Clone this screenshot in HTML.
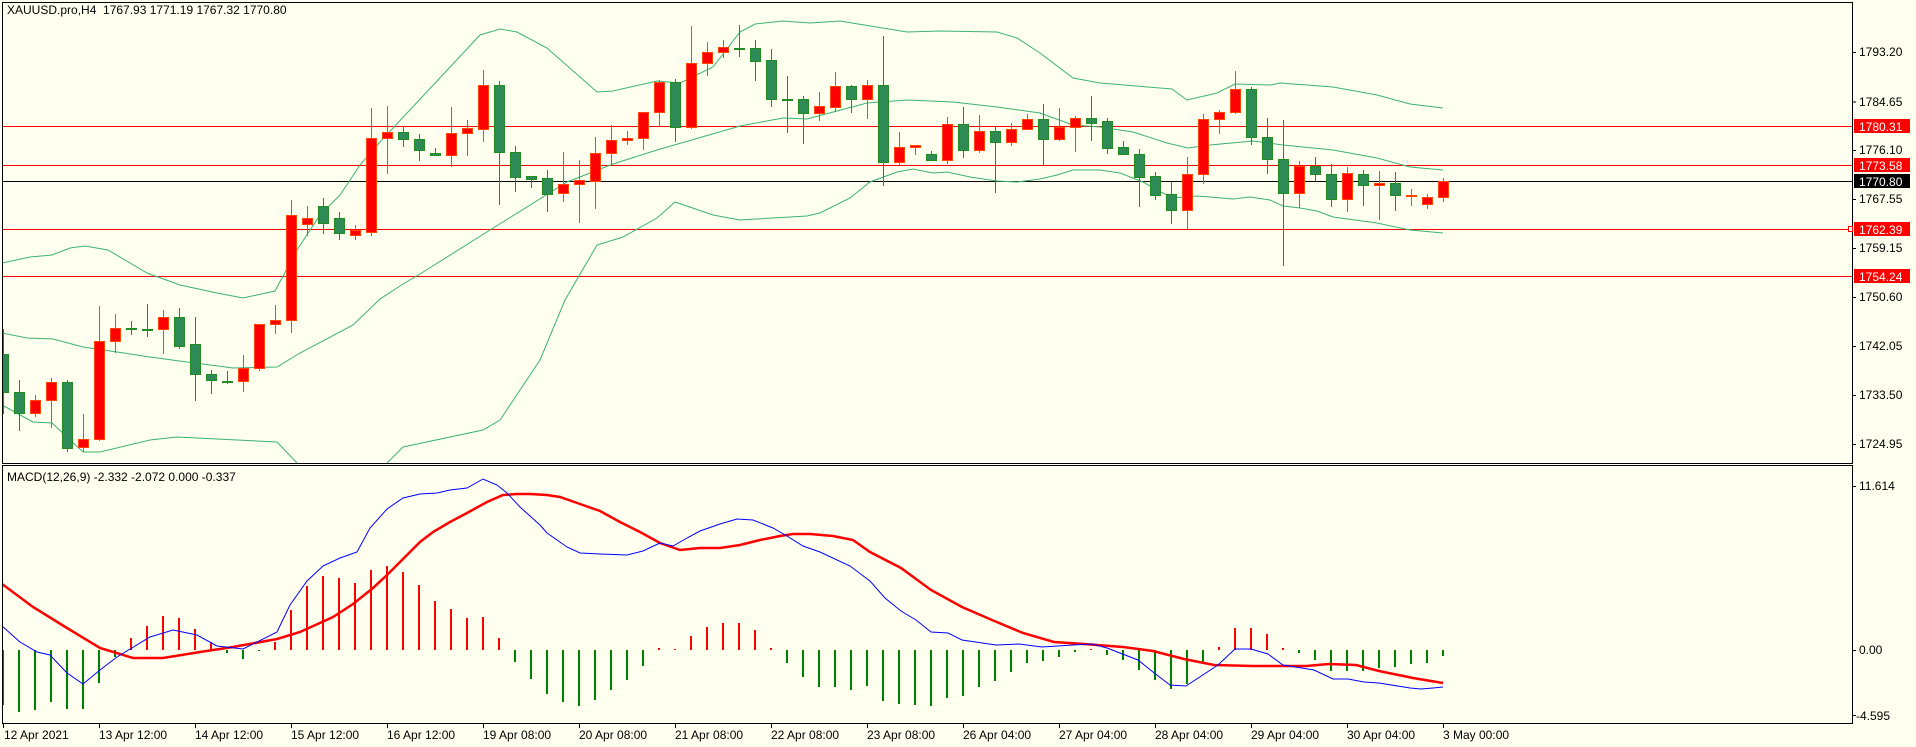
<!DOCTYPE html>
<html><head><meta charset="utf-8"><style>
html,body{margin:0;padding:0;background:#FFFFF0;}
svg{display:block;font-family:"Liberation Sans",sans-serif;font-size:12px;}
</style></head><body>
<svg id="s" width="1916" height="747" xmlns="http://www.w3.org/2000/svg">
<rect x="0" y="0" width="1916" height="747" fill="#FFFFF0"/>
<defs>
<clipPath id="c1"><rect x="2" y="2" width="1850" height="461"/></clipPath>
<clipPath id="c2"><rect x="2" y="465" width="1850" height="258"/></clipPath>
</defs>
<g id="top" clip-path="url(#c1)"></g>
<g id="bot" clip-path="url(#c2)"></g>
<g stroke="#000" stroke-width="1" fill="none" shape-rendering="crispEdges">
<rect x="2.5" y="2.5" width="1850" height="461"/>
<rect x="2.5" y="465.5" width="1850" height="258"/>
</g>
<g id="ticks" stroke="#000" shape-rendering="crispEdges"></g>
<g fill="#000">
<text x="7" y="14">XAUUSD.pro,H4&#160;&#160;1767.93 1771.19 1767.32 1770.80</text>
<text x="7" y="481">MACD(12,26,9) -2.332 -2.072 0.000 -0.337</text>
<text x="1859" y="56">1793.20</text>
<text x="1859" y="106">1784.65</text>
<text x="1859" y="154">1776.10</text>
<text x="1859" y="203">1767.55</text>
<text x="1859" y="252">1759.15</text>
<text x="1859" y="301">1750.60</text>
<text x="1859" y="350">1742.05</text>
<text x="1859" y="399">1733.50</text>
<text x="1859" y="448">1724.95</text>
<text x="1859" y="490">11.614</text>
<text x="1859" y="654">0.00</text>
<text x="1856" y="720">-4.595</text>
</g>
<g shape-rendering="crispEdges">
<rect x="1854" y="119" width="56" height="14" fill="#FF0000"/>
<rect x="1854" y="158" width="56" height="14" fill="#FF0000"/>
<rect x="1854" y="174" width="56" height="14" fill="#000"/>
<rect x="1854" y="222" width="56" height="14" fill="#FF0000"/>
<rect x="1854" y="269" width="56" height="14" fill="#FF0000"/>
</g>
<g fill="#fff">
<text x="1859" y="131">1780.31</text>
<text x="1859" y="170">1773.58</text>
<text x="1859" y="186">1770.80</text>
<text x="1859" y="234">1762.39</text>
<text x="1859" y="281">1754.24</text>
</g>
<g fill="#000">
<text x="4" y="739">12 Apr 2021</text>
<text x="99" y="739">13 Apr 12:00</text>
<text x="195" y="739">14 Apr 12:00</text>
<text x="291" y="739">15 Apr 12:00</text>
<text x="387" y="739">16 Apr 12:00</text>
<text x="483" y="739">19 Apr 08:00</text>
<text x="579" y="739">20 Apr 08:00</text>
<text x="675" y="739">21 Apr 08:00</text>
<text x="771" y="739">22 Apr 08:00</text>
<text x="867" y="739">23 Apr 08:00</text>
<text x="963" y="739">26 Apr 04:00</text>
<text x="1059" y="739">27 Apr 04:00</text>
<text x="1155" y="739">28 Apr 04:00</text>
<text x="1251" y="739">29 Apr 04:00</text>
<text x="1347" y="739">30 Apr 04:00</text>
<text x="1443" y="739">3 May 00:00</text>
</g>
</svg>
<script>
var NS="http://www.w3.org/2000/svg";
function el(p,t,a){var e=document.createElementNS(NS,t);for(var k in a)e.setAttribute(k,a[k]);p.appendChild(e);return e;}
var top_=document.getElementById('top'),bot=document.getElementById('bot'),tk=document.getElementById('ticks');
function pl(p,pts,col,w){el(p,'polyline',{points:pts.map(function(q){return q.join(',')}).join(' '),fill:'none',stroke:col,'stroke-width':w});}
// horizontal lines
[[126.5,'#FF0000'],[165.5,'#FF0000'],[229.5,'#FF0000'],[276.5,'#FF0000'],[181.5,'#000']].forEach(function(h){
 el(top_,'line',{x1:2,x2:1852,y1:h[0],y2:h[0],stroke:h[1],'stroke-width':1,'shape-rendering':'crispEdges'});});
el(document.getElementById('s'),'rect',{x:1848.5,y:226.5,width:4,height:5,fill:'#fff',stroke:'#FF0000'});
// bands
var up=[[2,263],[30,257],[52,255],[70,248],[85,246],[108,250],[147,273],[180,285],[217,293],[243,298],[275,291],[297,250],[320,215],[340,195],[360,165],[380,142],[480,35],[500,29],[517,32],[547,48],[597,92],[613,91],[657,81],[680,83],[713,67],[740,32],[755,24],[783,21],[810,23],[840,21],[907,32],[940,31],[997,32],[1017,38],[1040,53],[1073,78],[1100,83],[1172,89],[1187,100],[1217,93],[1235,84],[1270,85],[1280,83],[1333,87],[1377,95],[1410,104],[1443,108]];
var mid=[[2,333],[27,338],[53,339],[83,347],[117,352],[150,357],[187,362],[233,368],[277,367],[300,353],[353,325],[380,299],[403,284],[420,274],[490,230],[567,182],[613,164],[657,150],[740,126],[783,118],[807,119],[867,103],[880,102],[907,100],[953,102],[997,107],[1040,113],[1073,125],[1100,127],[1133,132],[1167,143],[1188,148],[1210,145],[1253,141],[1283,145],[1333,150],[1377,158],[1410,167],[1443,170]];
var lo=[[2,405],[33,422],[52,423],[83,452],[100,452],[150,440],[177,437],[217,439],[277,442],[297,463],[310,480],[370,480],[387,463],[403,447],[483,430],[500,420],[540,360],[565,300],[597,245],[623,237],[657,218],[675,202],[713,215],[740,220],[807,216],[820,213],[850,198],[870,182],[897,172],[913,169],[933,173],[947,172],[970,177],[997,181],[1017,182],[1040,179],[1057,175],[1073,170],[1100,170],[1120,173],[1143,182],[1172,198],[1197,196],[1210,197],[1233,199],[1250,197],[1270,200],[1283,206],[1300,208],[1317,211],[1333,217],[1377,223],[1410,230],[1443,233]];
[up,mid,lo].forEach(function(b){pl(top_,b,'#3CB371',1);});
// candles
var C="g 354 392 329 414|g 392 413 380 431|r 400 413 395 417|r 382 400 378 428|g 382 448 380 452|r 439 447 414 452|r 341 439 306 441|r 328 341 314 353|g 328 328 321 335|g 329 329 304 337|r 317 329 310 354|g 317 346 308 349|g 344 374 317 401|g 374 380 370 394|g 381 381 371 384|r 368 381 355 392|r 324 368 324 371|r 320 324 305 334|r 215 320 200 333|r 218 224 206 236|g 206 223 198 234|g 218 233 212 240|r 230 235 225 240|r 138 232 108 236|r 132 138 106 174|g 132 139 127 147|g 139 150 134 161|g 153 155 148 155|r 133 155 107 167|r 128 133 120 156|r 85 129 70 142|g 85 152 81 205|g 152 177 146 192|g 176 179 176 188|g 178 194 170 212|r 184 193 152 202|r 180 184 160 223|r 153 181 137 209|r 140 153 125 165|r 138 140 131 145|r 112 138 112 150|r 82 112 80 127|g 82 127 79 142|r 63 127 26 129|r 52 63 42 76|r 47 52 40 58|g 48 48 25 57|g 48 61 40 81|g 60 99 49 107|g 99 99 76 133|g 99 113 96 144|r 106 113 92 121|r 86 107 72 112|g 86 99 85 113|r 85 99 80 119|g 85 162 36 186|r 147 162 132 165|r 145 147 145 155|g 154 160 151 160|r 124 160 117 164|g 124 150 107 158|r 131 150 115 153|g 131 142 127 193|r 129 142 123 146|r 119 129 114 129|g 119 139 104 165|r 127 139 108 141|r 118 127 116 152|g 118 123 96 141|g 121 148 118 154|g 147 154 141 154|g 154 177 149 207|g 176 195 172 200|g 194 210 182 224|r 174 210 157 229|r 119 174 114 184|r 112 119 110 134|r 89 112 71 114|g 89 137 87 145|g 137 159 118 174|g 159 193 120 266|r 166 193 161 208|g 166 174 157 181|g 174 199 164 207|r 173 199 167 212|g 174 185 170 206|r 183 185 171 220|g 183 195 172 211|r 195 195 189 206|r 197 204 194 209|r 181 197 178 202".split('|');
C.forEach(function(s,i){var a=s.split(' '),x=3+16*i,bt=+a[1],bb=+a[2],wt=+a[3],wb=+a[4];
 var wc=a[0]=='r'?'#FF4500':'#228B22',fc=a[0]=='r'?'#FF0000':'#2E8B57';
 el(top_,'line',{x1:x+.5,x2:x+.5,y1:wt,y2:wb,stroke:wc,'stroke-width':1,'shape-rendering':'crispEdges'});
 if(bb-bt<2){el(top_,'rect',{x:x-5,y:bt,width:11,height:2,fill:wc,'shape-rendering':'crispEdges'});}
 else el(top_,'rect',{x:x-4.5,y:bt+.5,width:10,height:bb-bt,fill:fc,stroke:wc,'stroke-width':1,'shape-rendering':'crispEdges'});
});
// histogram
var H=[705,712,710,702,709,709,683,657,638,626,616,618,629,642,653,659,651,642,610,586,576,578,583,570,566,572,585,601,609,618,617,638,662,679,694,702,706,700,690,680,666,648,649,636,627,623,623,630,648,663,677,687,687,690,686,701,704,705,706,698,696,687,681,672,663,661,657,652,649,655,660,670,680,689,684,664,647,628,628,634,648,653,660,671,671,671,668,667,664,663,656];
H.forEach(function(v,i){var x=3+16*i;var up=v<650;
 el(bot,'rect',{x:x-1,y:Math.min(v,650),width:2,height:Math.max(1,Math.abs(v-650)),fill:up?'#FF0000':'#008000','shape-rendering':'crispEdges'});});
var sig=[[2,584],[33,607],[67,628],[100,648],[133,658],[163,658],[200,652],[233,647],[277,639],[300,632],[333,617],[353,604],[373,588],[387,575],[420,542],[433,532],[450,522],[467,513],[487,502],[503,495],[517,494],[530,494],[547,495],[560,497],[580,504],[600,511],[620,522],[640,532],[660,543],[680,550],[700,548],[720,548],[740,545],[760,540],[780,536],[793,534],[810,534],[833,536],[853,540],[870,552],[901,568],[931,590],[962,607],[992,620],[1023,633],[1054,642],[1084,644],[1123,647],[1153,651],[1184,659],[1214,665],[1253,666],[1306,666],[1329,664],[1356,665],[1379,671],[1413,678],[1443,683]];
var mac=[[2,626],[20,642],[37,652],[50,655],[67,673],[83,684],[100,670],[117,657],[150,637],[173,630],[197,635],[217,646],[243,649],[277,632],[290,605],[307,581],[323,566],[340,558],[357,552],[370,528],[387,509],[403,498],[420,494],[437,493],[450,490],[467,488],[483,479],[497,485],[507,493],[520,507],[540,525],[547,533],[567,547],[580,553],[600,554],[627,555],[643,551],[660,543],[673,546],[687,538],[700,531],[720,524],[737,519],[753,520],[773,528],[787,536],[803,546],[820,552],[850,566],[870,581],[885,598],[901,611],[916,620],[931,632],[948,633],[962,640],[996,645],[1019,644],[1042,647],[1073,645],[1092,644],[1107,648],[1138,660],[1153,672],[1170,685],[1186,686],[1218,665],[1235,649],[1251,649],[1268,654],[1283,665],[1314,670],[1333,679],[1348,679],[1364,682],[1379,683],[1410,688],[1421,689],[1433,688],[1443,687]];
pl(bot,sig,'#FF0000',2.5);
pl(bot,mac,'#0000FF',1);
// ticks
[52,101.5,150,199,248,297,346,395,444,486,650,715].forEach(function(y){el(tk,'line',{x1:1852,x2:1856,y1:y+.5,y2:y+.5});});
for(var k=0;k<16;k++){var x=3+96*k+.5;el(tk,'line',{x1:x,x2:x,y1:723,y2:728});}
</script>
</body></html>
